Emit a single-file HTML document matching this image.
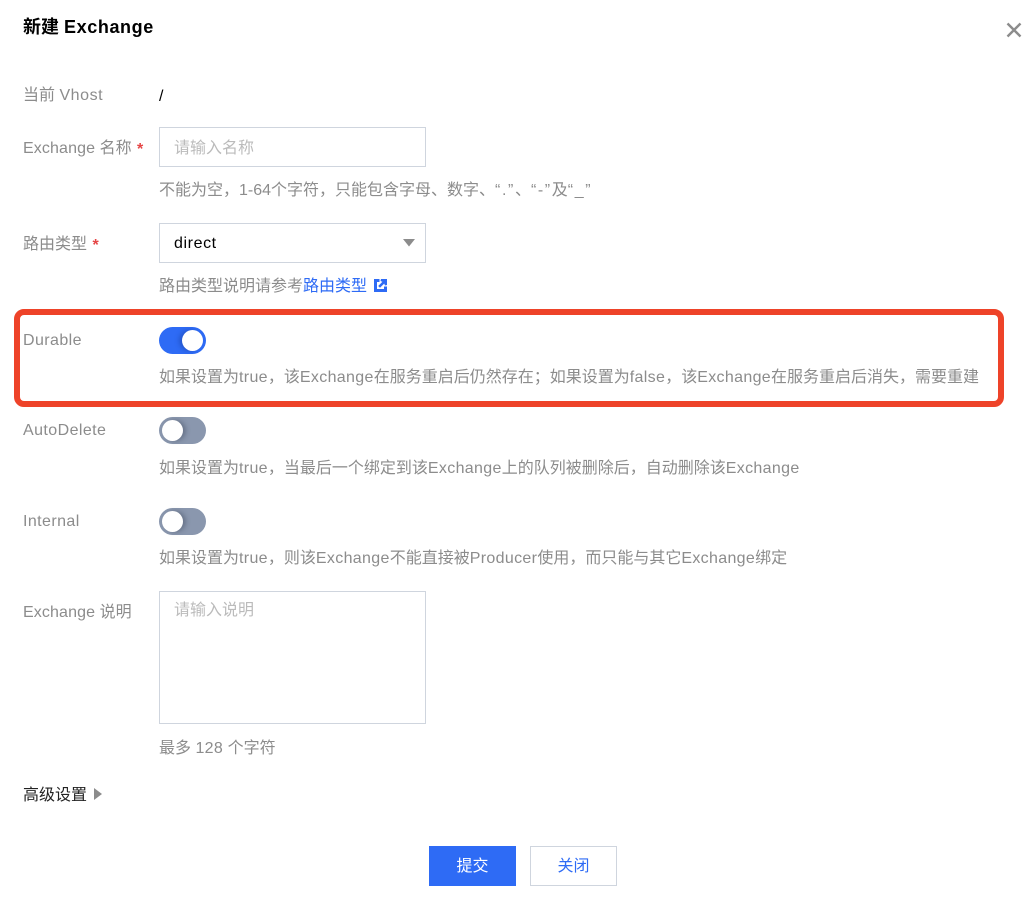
<!DOCTYPE html>
<html lang="zh-CN">
<head>
<meta charset="utf-8">
<title>新建 Exchange</title>
<style>
html,body{margin:0;padding:0;background:#fff}
body{width:1034px;height:906px;position:relative;overflow:hidden;font-family:"Liberation Sans","Noto Sans CJK SC",sans-serif;font-size:16px;color:#8c8c8c}
.t{position:absolute;white-space:nowrap;line-height:24px;height:24px}
.l{color:#8c8c8c;left:23px}
.h{color:#8c8c8c;left:159px}
.e{letter-spacing:.33px}
.e4{letter-spacing:.42px}
.star{color:#e54545;font-weight:700;margin-left:1px;position:relative;top:1px}
.box{position:absolute;box-sizing:border-box;border:1px solid #cfd5de;background:#fff}
.ph{color:#bbb}
.sw{position:absolute;left:159px;width:47px;height:27px;border-radius:14px}
.sw.on{background:#2e6bf5;top:327px}
.sw.off{background:#8a97ae}
.sw i{position:absolute;top:3px;width:21px;height:21px;border-radius:50%;background:#fff}
.sw.on i{right:3px;box-shadow:-3px 0 5px rgba(20,50,130,.35)}
.sw.off i{left:3px;box-shadow:3px 0 5px rgba(40,50,70,.35)}
</style>
</head>
<body>
<div class="t" style="left:23px;top:15px;color:#000;font-weight:700;font-size:18px">新建 <span style="letter-spacing:.6px">Exchange</span></div>
<svg style="position:absolute;left:1006px;top:22px" width="16" height="16" viewBox="0 0 16 16"><path d="M1.5 1.5L14.5 14.5M14.5 1.5L1.5 14.5" stroke="#8c8c8c" stroke-width="2.4" fill="none"/></svg>

<div class="t l" style="top:84px">当前 <span style="letter-spacing:.55px">Vhost</span></div>
<div class="t" style="left:159px;top:85px;color:#000">/</div>

<div class="t l" style="top:137px"><span style="letter-spacing:.12px">Exchange</span> 名称 <span class="star">*</span></div>
<div class="box" style="left:159px;top:127px;width:267px;height:40px"></div>
<div class="t ph" style="left:174px;top:137px">请输入名称</div>
<div class="t h" style="top:179px">不能为空，1-64个字符，只能包含字母、数字、<span style="letter-spacing:1.6px">“.”</span>、<span style="letter-spacing:1.6px">“-”</span>及<span style="letter-spacing:1.6px">“_”</span></div>

<div class="t l" style="top:233px">路由类型 <span class="star">*</span></div>
<div class="box" style="left:159px;top:223px;width:267px;height:40px"></div>
<div class="t" style="left:174px;top:232px;color:#000;letter-spacing:.6px">direct</div>
<svg style="position:absolute;left:403px;top:239px" width="12" height="8" viewBox="0 0 12 8"><path d="M0 0H12L6 7.5Z" fill="#8c8c8c"/></svg>
<div class="t h" style="top:275px">路由类型说明请参考<span style="color:#2e6bf5">路由类型</span></div>
<svg style="position:absolute;left:374px;top:279px" width="13" height="13" viewBox="0 0 13 13"><path d="M5.5 1.5H1.5V11.5H11.5V7.5" stroke="#2e6bf5" stroke-width="3" fill="none"/><path d="M7 0H13V6L11 6.5L10.2 4.6L6 8.8L4.2 7L8.4 2.8L6.5 2Z" fill="#2e6bf5"/></svg>

<div style="position:absolute;left:14px;top:309px;width:990px;height:98px;box-sizing:border-box;border:6px solid #ee4329;border-radius:10px"></div>

<div class="t l e4" style="top:329px">Durable</div>
<div class="sw on"><i></i></div>
<div class="t h" style="top:366px">如果设置为<span class="e">true</span>，该<span class="e">Exchange</span>在服务重启后仍然存在；如果设置为<span class="e">false</span>，该<span class="e">Exchange</span>在服务重启后消失，需要重建</div>

<div class="t l e4" style="top:419px">AutoDelete</div>
<div class="sw off" style="top:417px"><i></i></div>
<div class="t h" style="top:457px">如果设置为<span class="e">true</span>，当最后一个绑定到该<span class="e">Exchange</span>上的队列被删除后，自动删除该<span class="e">Exchange</span></div>

<div class="t l e4" style="top:510px">Internal</div>
<div class="sw off" style="top:508px"><i></i></div>
<div class="t h" style="top:547px">如果设置为<span class="e">true</span>，则该<span class="e">Exchange</span>不能直接被<span class="e">Producer</span>使用，而只能与其它<span class="e">Exchange</span>绑定</div>

<div class="t l" style="top:601px"><span style="letter-spacing:.12px">Exchange</span> 说明</div>
<div class="box" style="left:159px;top:591px;width:267px;height:133px"></div>
<div class="t ph" style="left:174px;top:599px">请输入说明</div>
<div class="t h" style="top:737px">最多 <span class="e">128</span> 个字符</div>

<div class="t" style="left:23px;top:784px;color:#222">高级设置</div>
<svg style="position:absolute;left:94px;top:788px" width="8" height="12" viewBox="0 0 8 12"><path d="M0 0L8 6L0 12Z" fill="#8c8c8c"/></svg>

<div style="position:absolute;left:429px;top:846px;width:87px;height:40px;background:#2e6bf5;color:#fff;text-align:center;line-height:41px">提交</div>
<div style="position:absolute;left:530px;top:846px;width:87px;height:40px;box-sizing:border-box;border:1px solid #cfd5de;color:#2e6bf5;text-align:center;line-height:39px">关闭</div>
</body>
</html>
